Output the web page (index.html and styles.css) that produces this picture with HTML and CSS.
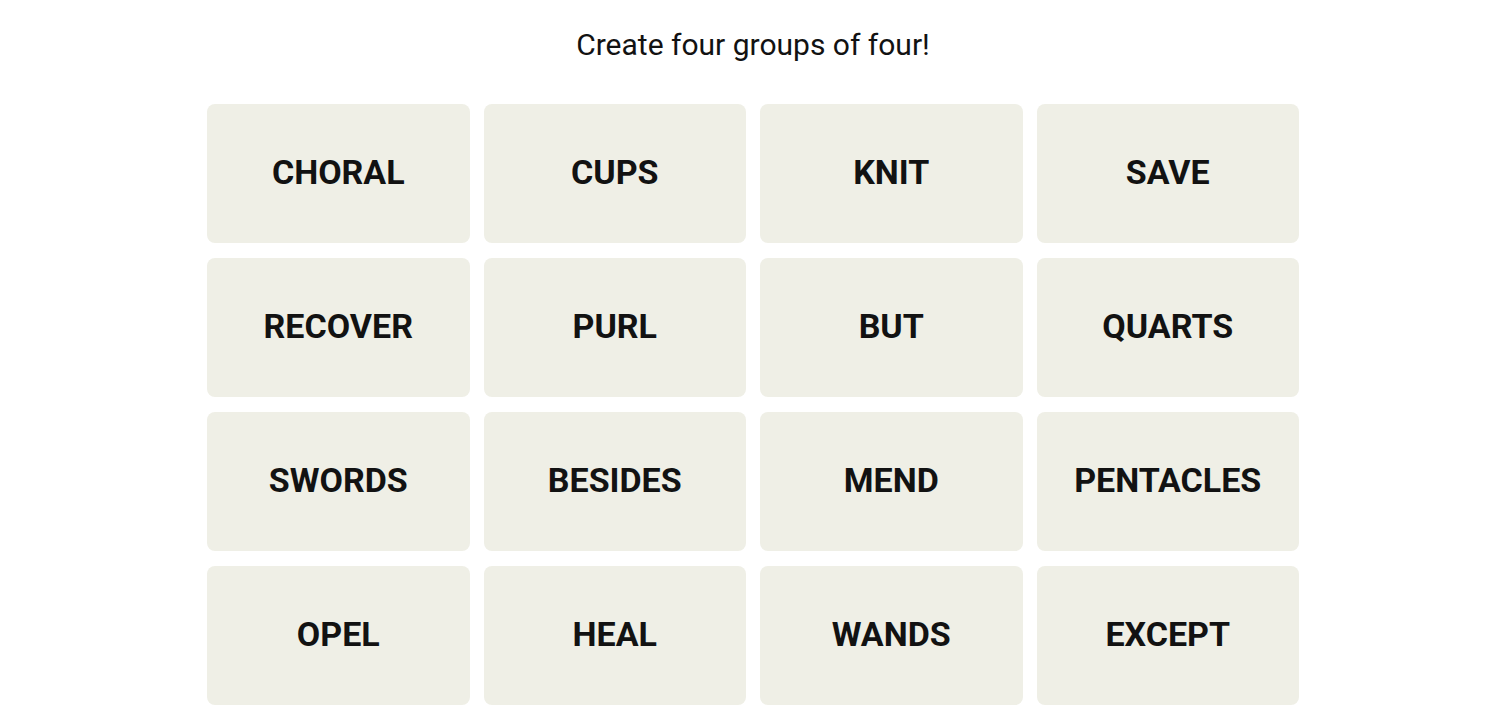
FILE: index.html
```html
<!DOCTYPE html>
<html lang="en">
<head>
    <meta charset="UTF-8">
    <meta name="viewport" content="width=device-width, initial-scale=1.0">
    <title>Connections</title>
    <link rel="stylesheet" href="styles.css">
</head>
<body>
    <div class="game">
        <p class="prompt">Create four groups of four!</p>

        <div class="board">
            <button class="tile">CHORAL</button>
            <button class="tile">CUPS</button>
            <button class="tile">KNIT</button>
            <button class="tile">SAVE</button>

            <button class="tile">RECOVER</button>
            <button class="tile">PURL</button>
            <button class="tile">BUT</button>
            <button class="tile">QUARTS</button>

            <button class="tile">SWORDS</button>
            <button class="tile">BESIDES</button>
            <button class="tile">MEND</button>
            <button class="tile">PENTACLES</button>

            <button class="tile">OPEL</button>
            <button class="tile">HEAL</button>
            <button class="tile">WANDS</button>
            <button class="tile">EXCEPT</button>
        </div>
    </div>
</body>
</html>
```

FILE: styles.css
```css
* {
    margin: 0;
    padding: 0;
    box-sizing: border-box;
}

body {
    font-family: Roboto, 'Liberation Sans', sans-serif;
    background: #fff;
    color: #121212;
}

.game {
    width: 1092px;
    margin-left: calc(50% - 543px);
    padding-top: 26px;
}

.prompt {
    text-align: center;
    font-size: 30px;
    line-height: 38px;
    font-weight: 400;
    margin-bottom: 40px;
}

.board {
    display: grid;
    grid-template-columns: repeat(4, 1fr);
    grid-auto-rows: 139px;
    column-gap: 14px;
    row-gap: 15px;
}

.tile {
    background: #efefe6;
    border: none;
    border-radius: 8px;
    padding-bottom: 4px;
    font-family: inherit;
    font-size: 34px;
    font-weight: 700;
    color: #121212;
    cursor: pointer;
}
```
